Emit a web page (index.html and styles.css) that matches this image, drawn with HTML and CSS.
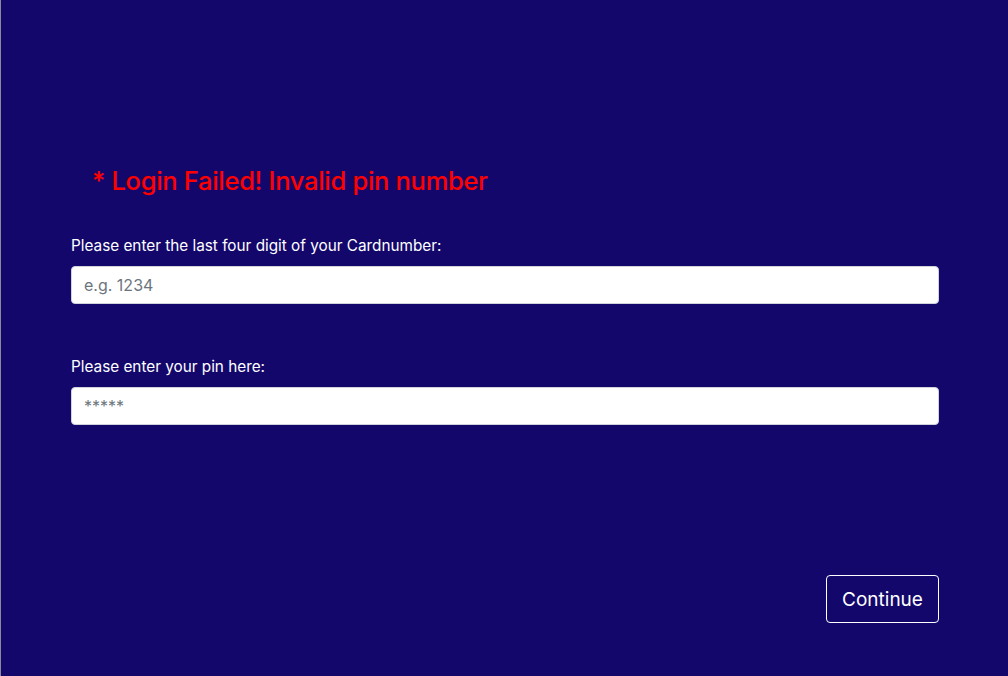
FILE: index.html
```html
<!DOCTYPE html>
<html>
<head>
<meta charset="utf-8">
<link rel="stylesheet" href="styles.css">
</head>
<body>
<div class="page">
  <main class="form">
    <h2 class="error">* Login Failed! Invalid pin number</h2>
    <div class="field">
      <label class="label" for="card">Please enter the last four digit of your Cardnumber:</label>
      <input class="input" id="card" type="text" placeholder="e.g. 1234">
    </div>
    <div class="field">
      <label class="label" for="pin">Please enter your pin here:</label>
      <input class="input" id="pin" type="password" placeholder="*****">
    </div>
    <div class="actions">
      <button class="btn">Continue</button>
    </div>
  </main>
</div>
</body>
</html>
```
FILE: styles.css
```css
html, body {
  margin: 0;
  padding: 0;
  height: 100%;
}
body {
  background: #13076c;
  font-family: Inter, "Liberation Sans", sans-serif;
  color: #fff;
}
.page {
  min-height: 100%;
  border-left: 1px solid #8a8a9a;
  box-sizing: border-box;
}
.form {
  width: 868px;
  margin-left: 70px;
  padding-top: 163px;
  display: flex;
  flex-direction: column;
}
.error {
  margin: 0 0 0 21px;
  color: #ff0000;
  font-size: 25.5px;
  font-weight: 500;
  line-height: 36px;
  letter-spacing: -0.3px;
}
.field {
  display: flex;
  flex-direction: column;
  margin-top: 36px;
}
.field + .field {
  margin-top: 52px;
}
.label {
  font-size: 15.3px;
  line-height: 22px;
  margin-bottom: 9px;
}
.input {
  height: 38px;
  box-sizing: border-box;
  border: 1px solid #ced4da;
  border-radius: 4px;
  padding: 0 12px;
  font-family: inherit;
  font-size: 16px;
  color: #495057;
  background: #fff;
}
.input::placeholder {
  color: #6c757d;
}
.actions {
  display: flex;
  justify-content: flex-end;
  margin-top: 150px;
}
.btn {
  width: 113px;
  height: 48px;
  background: transparent;
  color: #fff;
  border: 1px solid #fff;
  border-radius: 4px;
  font-family: inherit;
  font-size: 19px;
}
```
